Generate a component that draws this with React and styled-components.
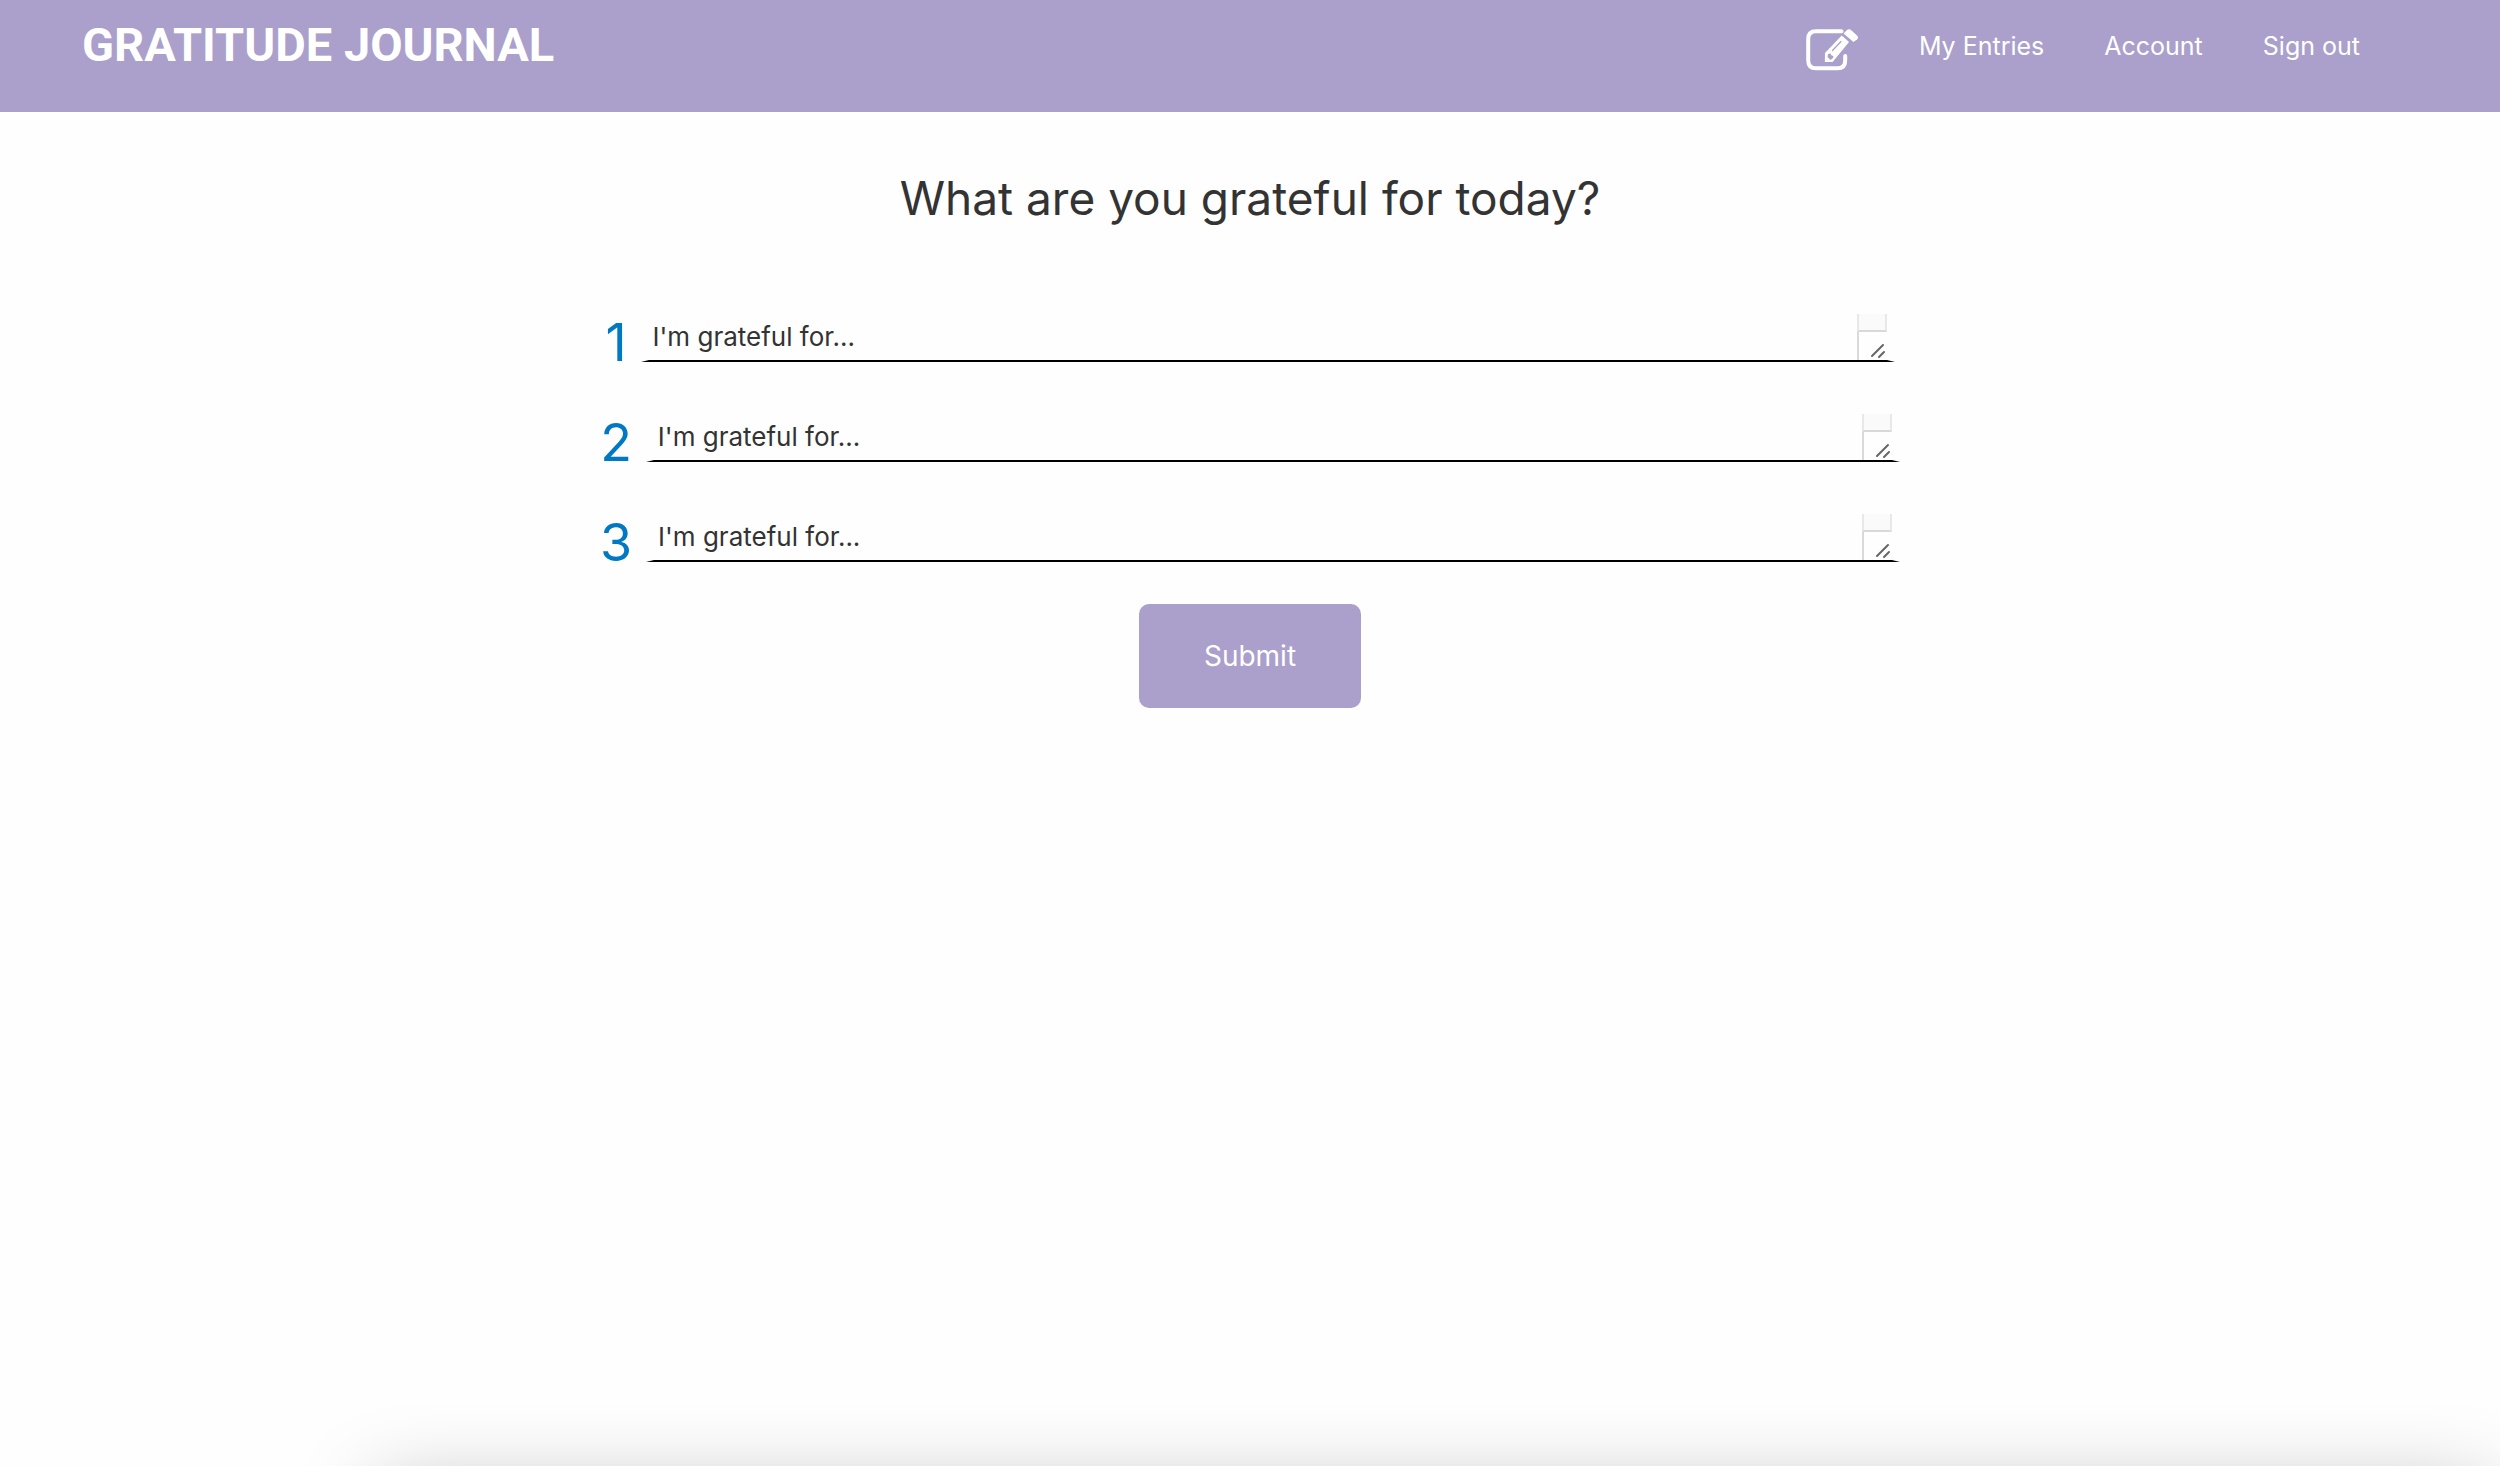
import React from "react";
import styled, { createGlobalStyle } from "styled-components";

const GlobalStyle = createGlobalStyle`
  *, *::before, *::after { box-sizing: border-box; }
  body {
    margin: 0;
    background: #fefefe;
    color: #333;
    font-family: Inter, "Liberation Sans", sans-serif;
  }
`;

const Page = styled.div`
  position: relative;
  min-height: 100vh;
  overflow: hidden;
`;

const Header = styled.header`
  display: flex;
  justify-content: space-between;
  align-items: flex-start;
  height: 112px;
  padding: 20px 140px 0 82px;
  background: #aaa0cb;
`;

const Brand = styled.h1`
  margin: 0;
  color: #fff;
  font-family: Roboto, sans-serif;
  font-size: 47px;
  line-height: 50px;
  font-weight: 700;
`;

const Nav = styled.nav`
  display: flex;
  align-items: flex-start;
  gap: 60px;
  padding-top: 9px;
`;

const NavLink = styled.a`
  display: flex;
  color: #fff;
  font-size: 25px;
  line-height: 34px;
  text-decoration: none;
`;

const Main = styled.main`
  display: flex;
  flex-direction: column;
  align-items: center;
`;

const Heading = styled.h2`
  margin: 56px 0 76px;
  font-size: 46px;
  line-height: 60px;
  font-weight: 400;
`;

const Form = styled.form`
  display: flex;
  flex-direction: column;
  align-items: center;
  width: 100%;
  gap: 42px;
`;

const Row = styled.div`
  display: flex;
  justify-content: center;
  align-items: flex-end;
  gap: 14px;
  width: 100%;
  height: 58px;
`;

const Numeral = styled.label`
  color: #0078c4;
  font-size: 52px;
  line-height: 38px;
`;

const Field = styled.div`
  display: flex;
  width: calc(50% + 4px);
  height: 48px;
  border: solid transparent;
  border-width: 0 8px 2px;
  border-bottom-color: #000;
`;

const Entry = styled.textarea`
  flex: 1;
  min-width: 0;
  height: 46px;
  margin: 0;
  padding: 7px 4px;
  border: 0;
  outline: 0;
  resize: none;
  overflow: hidden;
  background: transparent;
  color: #333;
  font: 400 26px/32px Inter, sans-serif;
  &::placeholder { color: #333; opacity: 1; }
`;

const Scroller = styled.div`
  display: flex;
  flex-direction: column;
  width: 30px;
`;

const Track = styled.div`
  height: 18px;
  border: solid #d9d9d9;
  border-width: 0 2px 2px;
  border-right-color: #e8e8e8;
  border-left-color: #e8e8e8;
  background: #fafafa;
`;

const Corner = styled.div`
  display: flex;
  justify-content: flex-end;
  align-items: flex-end;
  flex: 1;
  border-left: 2px solid #d9d9d9;
`;

const Submit = styled.button`
  width: 222px;
  height: 104px;
  border: 0;
  border-radius: 10px;
  background: #aaa0cb;
  color: #fff;
  font: 400 28px/32px Inter, sans-serif;
`;

const BottomShade = styled.div`
  position: absolute;
  left: 375px;
  right: 10px;
  top: 100%;
  height: 200px;
  box-shadow: 0 20px 80px rgba(0, 0, 0, 0.25);
`;

const EditIcon = () => (
  <svg width="53" height="42" viewBox="0 0 53 42" fill="none" aria-hidden="true">
    <path d="M35.5 2.200H10Q2.200 2.200 2.200 10V31.500Q2.200 39.300 10 39.300H31.500Q39.200 39.300 39.200 31.500V27" stroke="#fff" strokeWidth="4" strokeLinecap="round" />
    <path fill="#fff" fillRule="evenodd" d="M19 24L35.700 6.500L43 13L27 32.500Q26.500 33 25.500 33H19.500Q18.800 33 18.800 32ZM22 25L24.500 24.500L25.500 26.500L27.500 27L27 29L24.500 31L21.500 28Z" />
    <path d="M26.500 21.500L35 12.500" stroke="#aaa0cb" strokeWidth="1.200" strokeLinecap="round" />
    <path fill="#fff" d="M37.500 4.500L41 1Q43 -.500 45 1L51 6.500Q53 8.500 51 10.500L47.500 13Z" />
  </svg>
);

const Grip = () => (
  <svg width="18" height="18" viewBox="0 0 18 18" stroke="#666" strokeWidth="2" strokeLinecap="round" aria-hidden="true">
    <path d="M3 14L14 3M10 15L15 10" />
  </svg>
);

const entries = [1, 2, 3];

export default function App() {
  return (
    <Page>
      <GlobalStyle />
      <Header>
        <Brand>GRATITUDE JOURNAL</Brand>
        <Nav>
          <NavLink href="#new" aria-label="New entry"><EditIcon /></NavLink>
          <NavLink href="#entries">My Entries</NavLink>
          <NavLink href="#account">Account</NavLink>
          <NavLink href="#signout">Sign out</NavLink>
        </Nav>
      </Header>
      <Main>
        <Heading>What are you grateful for today?</Heading>
        <Form onSubmit={(e) => e.preventDefault()}>
          {entries.map((n) => (
            <Row key={n}>
              <Numeral htmlFor={`entry-${n}`}>{n}</Numeral>
              <Field>
                <Entry id={`entry-${n}`} rows={1} placeholder="I'm grateful for..." />
                <Scroller>
                  <Track />
                  <Corner><Grip /></Corner>
                </Scroller>
              </Field>
            </Row>
          ))}
          <Submit type="submit">Submit</Submit>
        </Form>
      </Main>
      <BottomShade />
    </Page>
  );
}
